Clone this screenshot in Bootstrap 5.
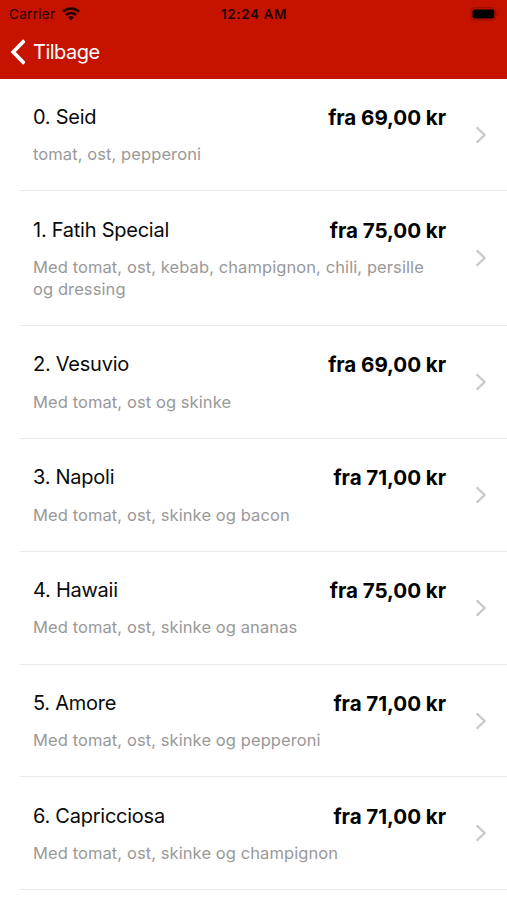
<!DOCTYPE html>
<html lang="da">
<head>
<meta charset="utf-8">
<meta name="viewport" content="width=device-width, initial-scale=1">
<title>Pizza</title>
<link rel="stylesheet" href="https://cdn.jsdelivr.net/npm/bootstrap@5.3.0/dist/css/bootstrap.min.css">
<style>
body{font-family:Inter,"Liberation Sans",sans-serif;background:#fff;color:#0a0a0a;overflow:hidden}
.topbar{background:#c51300;height:79px}
.status{height:27px;color:#240300;font-size:13.5px;line-height:27px;padding:0 8px 0 9px}
.clock{font-weight:600;font-size:13.5px;letter-spacing:.6px;padding-top:1px}
.side{flex:1 1 0}
.carrier{letter-spacing:.3px;padding-top:1px}
.wifi{margin-left:7px}
.back{height:50px;color:#fff;font-size:20px;letter-spacing:-.5px;padding-left:10px;gap:8px}
.menu{padding-left:20px;margin-top:-.4px}
.dish{padding:25.3px 19px 25.1px 13px;border-bottom:1px solid #e9e9e9;color:#0a0a0a}
.dish-name{font-size:20px;line-height:26px;letter-spacing:-.25px}
.price{font-size:20.6px;line-height:28px;font-weight:700;letter-spacing:-.06px;color:#000}
.desc{font-size:16.5px;line-height:22px;margin-top:11.4px;color:#999;max-width:398px;letter-spacing:.09px}
.go{width:16px;margin-left:26px}
</style>
</head>
<body>
<header class="topbar">
  <div class="status d-flex align-items-center">
    <div class="side d-flex align-items-center"><span class="carrier">Carrier</span>
      <svg class="wifi" width="18" height="14" viewBox="0 0 18 14" fill="none" stroke="#240300" stroke-width="2.5"><path d="M1 4.7a11.4 11.4 0 0 1 16 0M4 8a7.2 7.2 0 0 1 10 0"/><path d="M9 13.5 6.2 10.4a4 4 0 0 1 5.6 0z" fill="#240300" stroke="none"/></svg>
    </div>
    <div class="clock">12:24 AM</div>
    <div class="side d-flex justify-content-end">
      <svg width="29" height="14" viewBox="0 0 29 14"><rect x=".8" y=".8" width="25" height="12.4" rx="3.6" fill="none" stroke="#960e00"/><rect x="2.5" y="2.4" width="21.8" height="9.2" rx="2" fill="#000"/><path d="M27 4.7q2.2 2.3 0 4.6z" fill="#960e00"/></svg>
    </div>
  </div>
  <a href="#" class="back d-flex align-items-center text-decoration-none">
    <svg width="15" height="26" viewBox="0 0 15 26" fill="none" stroke="#fff" stroke-width="3.8"><path d="M14.4 1.5 3.2 13l11.2 11.5"/></svg><span>Tilbage</span>
  </a>
</header>
<main class="menu" id="menu"></main>
<script>
const dishes = [
  ["0. Seid", "69,00", "tomat, ost, pepperoni"],
  ["1. Fatih Special", "75,00", "Med tomat, ost, kebab, champignon, chili, persille og dressing"],
  ["2. Vesuvio", "69,00", "Med tomat, ost og skinke"],
  ["3. Napoli", "71,00", "Med tomat, ost, skinke og bacon"],
  ["4. Hawaii", "75,00", "Med tomat, ost, skinke og ananas"],
  ["5. Amore", "71,00", "Med tomat, ost, skinke og pepperoni"],
  ["6. Capricciosa", "71,00", "Med tomat, ost, skinke og champignon"]
];
document.getElementById("menu").innerHTML = dishes.map(([name, price, desc]) => `
  <a href="#" class="dish d-flex align-items-center text-decoration-none">
    <div class="flex-grow-1">
      <div class="d-flex justify-content-between"><span class="dish-name">${name}</span><span class="price">fra ${price} kr</span></div>
      <div class="desc">${desc}</div>
    </div>
    <svg class="go flex-shrink-0" width="16" height="18" viewBox="0 0 16 18" fill="none" stroke="#c7c7c9" stroke-width="2.2"><path d="M4.6 1.2 12.6 9l-8 7.8"/></svg>
  </a>`).join("");
</script>
<script src="https://cdn.jsdelivr.net/npm/bootstrap@5.3.0/dist/js/bootstrap.bundle.min.js"></script>
</body>
</html>
